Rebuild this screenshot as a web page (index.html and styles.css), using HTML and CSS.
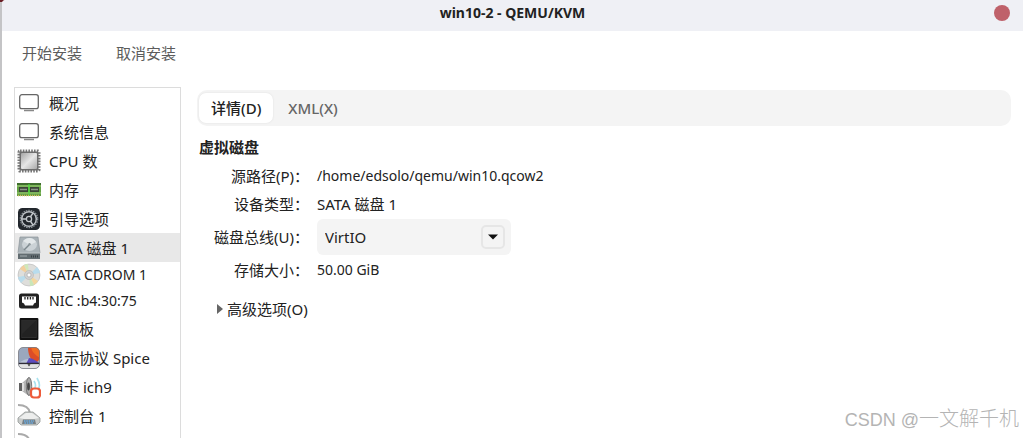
FILE: index.html
```html
<!DOCTYPE html>
<html lang="zh-CN">
<head>
<meta charset="utf-8">
<title>win10-2 - QEMU/KVM</title>
<link rel="stylesheet" href="styles.css">
</head>
<body>
<div class="window">
  <header class="titlebar">
    <h1 class="title">win10-2 - QEMU/KVM</h1>
    <button class="close" type="button" aria-label="关闭"></button>
  </header>
  <div class="toolbar">
    <button class="tool" type="button">开始安装</button>
    <button class="tool" type="button">取消安装</button>
  </div>
  <div class="content">
    <ul class="devices">
      <li class="device"><svg class="icon" viewBox="0 0 24 24"><rect x="2.700" y="3.700" width="18.600" height="14" rx="2.200" fill="#fff" stroke="#666" stroke-width="1.300"/><path d="M7 19.500h10" stroke="#888" stroke-width="1.300"/></svg>概况</li>
      <li class="device"><svg class="icon" viewBox="0 0 24 24"><rect x="2.700" y="3.700" width="18.600" height="14" rx="2.200" fill="#fff" stroke="#666" stroke-width="1.300"/><path d="M7 19.500h10" stroke="#888" stroke-width="1.300"/></svg>系统信息</li>
      <li class="device"><svg class="icon" viewBox="0 0 24 24"><defs><linearGradient id="chip" x2="1" y2="1"><stop stop-color="#a5a5a5"/><stop offset=".5" stop-color="#e6e6e6"/><stop offset="1" stop-color="#aaa"/></linearGradient></defs><rect x="2" y="2" width="20" height="20" rx="1" fill="none" stroke="#777" stroke-width="3" stroke-dasharray="1.600 1.200"/><rect x="2.500" y="2.500" width="19" height="19" rx="1.500" fill="#6d6d6d"/><rect x="4" y="4" width="16" height="16" rx="1" fill="url(#chip)"/></svg>CPU 数</li>
      <li class="device"><svg class="icon" viewBox="0 0 24 24"><path d="M0 5h24v13H0z" fill="#62a044"/><path d="M0 5h24v2H0z" fill="#3f6d2e"/><path d="M0 8h24M0 15h24" stroke="#9ccc76"/><path d="M2 9h9v5H2zM13 9h9v5h-9z" fill="#3a4437"/><path d="M3 11.500h7M14 11.500h7" stroke="#8c9689" stroke-width="1.500"/><path d="M12 6v12" stroke="#42ec38"/><path d="M1 17.500h22" stroke="#d8b661" stroke-width="1.500" stroke-dasharray="1 1"/></svg>内存</li>
      <li class="device"><svg class="icon" viewBox="0 0 24 24"><rect x="1" y="1" width="22" height="22" rx="4.500" fill="#22272d"/><circle cx="12" cy="12" r="8.700" fill="none" stroke="#8f969c" stroke-width="1.200" stroke-dasharray="1.500 1"/><circle cx="12" cy="12" r="7.300" fill="none" stroke="#b9bec3" stroke-width="1.500"/><path d="M12 12H5M12 12l4-6M12 12l4 6" stroke="#c2c7cb" stroke-width="1.400"/><circle cx="12" cy="12" r="2.600" fill="#22272d" stroke="#c2c7cb" stroke-width="1.300"/></svg>引导选项</li>
      <li class="device device-selected"><svg class="icon" viewBox="0 0 24 24"><path d="M3 1h18l2 16H1z" fill="#a9b2b7" stroke="#8b9499" stroke-width=".7"/><ellipse cx="12.500" cy="8.500" rx="7.500" ry="6.500" fill="#cbd2d6"/><path d="M6 5c4-4 10-4 13 1l-6 3z" fill="#e2e7e9"/><path d="M7 14l5-5" stroke="#7d888d" stroke-width="1.500"/><circle cx="12.500" cy="8.300" r="1.200" fill="#8d979c"/><path d="M1 17h22v6H1z" fill="#626c71"/><path d="M1 17h22" stroke="#cdd3d6"/><path d="M3 20h7" stroke="#a4adb1"/><path d="M14 20.500h7" stroke="#394145" stroke-width="2" stroke-dasharray="1 1"/></svg>SATA 磁盘 1</li>
      <li class="device device-latin"><svg class="icon" viewBox="0 0 24 24"><circle cx="12" cy="12" r="11" fill="#dededb" stroke="#b5b5b5" stroke-width=".6"/><path d="M12 12L3 6a11 11 0 0 1 4-4z" fill="#f2cf9d"/><path d="M12 12L7 2a11 11 0 0 1 4-1z" fill="#d0e8ba"/><path d="M12 12l8-8a11 11 0 0 1 3 6z" fill="#b8dced"/><path d="M12 12l9 6a11 11 0 0 1-4 4z" fill="#f4d79e"/><path d="M12 12l5 10a11 11 0 0 1-4 1z" fill="#c9e6b9"/><path d="M12 12l-8 8a11 11 0 0 1-3-6z" fill="#b9dcec"/><circle cx="12" cy="12" r="4.500" fill="#d1d1d1" stroke="#b5b5b5" stroke-width=".6"/><circle cx="12" cy="12" r="2" fill="#fff" stroke="#aaa" stroke-width=".7"/></svg>SATA CDROM 1</li>
      <li class="device device-latin"><svg class="icon" viewBox="0 0 24 24"><rect x="2" y="4.500" width="20" height="15" rx="2.500" fill="#222"/><path d="M5 7.500h14v6l-2 1-1 2H8l-1-2-2-1z" fill="#fff"/><path d="M8 8v2.500M10.700 8v2.500M13.400 8v2.500M16 8v2.500" stroke="#222" stroke-width="1.300"/></svg>NIC :b4:30:75</li>
      <li class="device"><svg class="icon" viewBox="0 0 24 24"><rect x="2.600" y="1" width="18.800" height="22" rx="1" fill="#111"/><rect x="4.800" y="3.300" width="14.400" height="17.400" fill="#222" stroke="#3b3b3b" stroke-width=".6"/><path d="M5 3.500h14L5 17z" fill="#292929"/></svg>绘图板</li>
      <li class="device"><svg class="icon" viewBox="0 0 24 24"><defs><clipPath id="screen"><rect x="1.500" y="1.500" width="21" height="21" rx="4.500"/></clipPath></defs><g clip-path="url(#screen)"><path d="M1 1h22v22H1z" fill="#9aa7bd"/><path d="M11 1h12v12l-5 5C13 13 11 8 11 1z" fill="#dc4d27"/><path d="M14 1h9v11C18 9 15 6 14 1z" fill="#ef6c22"/><path d="M1 18c4-4 8-5 11-5l2 5z" fill="#b9c3d6"/><path d="M9 18l3-6c3 0 8 3 11 6z" fill="#5c4cc0"/><path d="M1 16.700h22v1.600H1z" fill="#302d38"/><path d="M1 18.300h22V23H1z" fill="#e2e2e2"/></g><rect x="1.500" y="1.500" width="21" height="21" rx="4.500" fill="none" stroke="#777980" stroke-width=".8"/><path d="M10.500 18.300h3L12 20.500z" fill="#333"/></svg>显示协议 Spice</li>
      <li class="device"><svg class="icon" viewBox="0 0 24 24"><path d="M2 8h3v8H2z" fill="#606060"/><path d="M5 8l7-6v19l-7-5z" fill="#b5b5b5"/><path d="M5 8h2v8H5z" fill="#dedede"/><ellipse cx="12" cy="11.500" rx="2.700" ry="9" fill="#aaa" stroke="#777"/><ellipse cx="11.500" cy="11.500" rx="1.400" ry="4" fill="#444"/><path d="M17 6c2 3 2 6 0 9M20 3c3 5 3 9 1 12" fill="none" stroke="#a9e2ef" stroke-width="1.700"/><rect x="14" y="13.500" width="9" height="9" rx="3" fill="#fff" stroke="#ed5b3b" stroke-width="2.200"/></svg>声卡 ich9</li>
      <li class="device"><svg class="icon" viewBox="0 0 24 24"><path d="M1 1c6 0 11 2 12 8" fill="none" stroke="#aaa" stroke-width="2"/><path d="M1 14l7-6h8l7 6v4l-3 3H4l-3-3z" fill="#c7cac9" stroke="#939796" stroke-width=".8"/><path d="M2 14l7-5h6l7 5-5 1H7z" fill="#edeeed"/><path d="M6 15.500h12l1 4.500H5z" fill="#777f84"/><path d="M7 17h10M7.500 19h9" stroke="#6baee5" stroke-width="1.400" stroke-dasharray="1.500 .8"/></svg>控制台 1</li>
      <li class="device"><svg class="icon" viewBox="0 0 24 24"><path d="M1 1c6 0 11 2 12 8" fill="none" stroke="#aaa" stroke-width="2"/><path d="M1 14l7-6h8l7 6v7H1z" fill="#c7cac9" stroke="#939796"/></svg></li>
    </ul>
    <main class="details">
      <div class="tabs" role="tablist">
        <button class="tab tab-active" type="button" role="tab" aria-selected="true">详情(D)</button>
        <button class="tab" type="button" role="tab" aria-selected="false">XML(X)</button>
      </div>
      <h2 class="heading">虚拟磁盘</h2>
      <div class="form">
        <span class="label">源路径(P)：</span><span class="value-latin">/home/edsolo/qemu/win10.qcow2</span>
        <span class="label">设备类型：</span><span>SATA 磁盘 1</span>
        <label class="label" for="bus">磁盘总线(U)：</label>
        <div class="combo">
          <select class="combo-select" id="bus"><option>VirtIO</option></select>
          <span class="combo-arrow"><svg width="10" height="6" viewBox="0 0 10 6"><path d="M0 .5h10L5 5.500z" fill="#111"/></svg></span>
        </div>
        <span class="label">存储大小：</span><span class="value-latin">50.00 GiB</span>
      </div>
      <details class="advanced">
        <summary class="advanced-summary"><svg class="expander" width="6" height="10" viewBox="0 0 6 10"><path d="M0 0l6 5-6 5z" fill="#666"/></svg>高级选项(O)</summary>
      </details>
    </main>
  </div>
</div>
<div class="watermark"><span class="watermark-site">CSDN @</span>一文解千机</div>
</body>
</html>
```

FILE: styles.css
```css
* {
  box-sizing: border-box;
}

body {
  margin: 0;
  padding-left: 2px;
  height: 100vh;
  overflow: hidden;
  background: linear-gradient(#6b1f26 2px, #c4c4c6 2px);
  color: #222;
  font: 15px/20px "Noto Sans", "Noto Sans CJK SC", sans-serif;
}

button,
select {
  border: 0;
  color: inherit;
  font: inherit;
}

.window {
  display: flex;
  flex-direction: column;
  height: 100%;
  background: #fff;
  border-top-left-radius: 4px;
  overflow: hidden;
}

.titlebar {
  display: grid;
  grid-template-columns: 1fr auto 1fr;
  align-items: center;
  flex: none;
  height: 31px;
  padding: 0 13px 5px;
  background: #eff0f5;
}

.title {
  grid-column: 2;
  margin: 0;
  font-size: 14px;
  font-weight: 700;
}

.close {
  justify-self: end;
  width: 16px;
  height: 16px;
  padding: 0;
  border-radius: 50%;
  background: #bf616a;
}

.toolbar {
  display: flex;
  flex: none;
  gap: 34px;
  padding: 12px 20px 24px;
}

.tool {
  padding: 0;
  background: none;
  color: #5c5c5c;
}

.content {
  display: flex;
  flex: 1;
  gap: 16px;
  min-height: 0;
  padding: 0 12px;
}

.devices {
  flex: none;
  width: 167px;
  margin: 0;
  padding: 0;
  border: 1px solid #dcdcdc;
  border-bottom: 0;
  overflow: hidden;
  list-style: none;
}

.device {
  display: flex;
  align-items: center;
  gap: 8px;
  height: 29px;
  padding-left: 2px;
  white-space: nowrap;
}

.device-latin {
  height: 26px;
  font-size: 14px;
}

.device-selected {
  background: #e8e8e8;
}

.icon {
  flex: none;
  width: 24px;
  height: 24px;
}

.details {
  flex: 1;
  min-width: 0;
  padding-top: 3px;
}

.tabs {
  display: flex;
  gap: 3px;
  padding: 3px 2px;
  border-radius: 10px;
  background: #f4f4f4;
}

.tab {
  height: 30px;
  padding: 0 12px;
  border-radius: 7px;
  background: none;
  color: #666;
  font-weight: 500;
}

.tab-active {
  background: #fff;
  box-shadow: 0 0 2px #ddd;
  color: #222;
}

.heading {
  margin: 11px 0 6px;
  padding-left: 2px;
  font-size: 15px;
  font-weight: 700;
}

.form {
  display: grid;
  grid-template-columns: 112px 1fr;
  align-items: center;
  gap: 2px 8px;
  line-height: 26px;
}

.label {
  text-align: right;
}

.value-latin {
  font-size: 14px;
}

.combo {
  position: relative;
  width: 194px;
}

.combo-select {
  display: block;
  width: 100%;
  height: 36px;
  padding: 0 36px 0 8px;
  border-radius: 6px;
  background: #f4f4f4;
  appearance: none;
}

.combo-arrow {
  position: absolute;
  top: 6px;
  right: 6px;
  display: flex;
  align-items: center;
  justify-content: center;
  width: 24px;
  height: 24px;
  border: 2px solid #e6e6e6;
  border-radius: 5px;
  pointer-events: none;
}

.advanced {
  margin-top: 16px;
  padding-left: 20px;
}

.advanced-summary {
  display: flex;
  align-items: center;
  gap: 4px;
  list-style: none;
}

.watermark {
  position: absolute;
  right: 4px;
  bottom: 6px;
  color: #b4b4b4;
  font: 300 20px/24px "Liberation Sans", "Noto Sans CJK SC", sans-serif;
}

.watermark-site {
  font-size: 18px;
}
```
